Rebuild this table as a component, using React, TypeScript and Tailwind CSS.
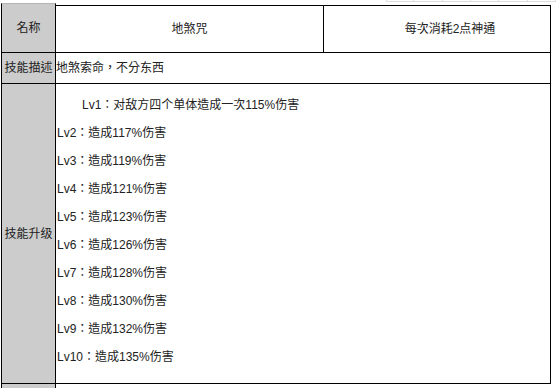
const levels = [
  "Lv1：对敌方四个单体造成一次115%伤害",
  "Lv2：造成117%伤害",
  "Lv3：造成119%伤害",
  "Lv4：造成121%伤害",
  "Lv5：造成123%伤害",
  "Lv6：造成126%伤害",
  "Lv7：造成128%伤害",
  "Lv8：造成130%伤害",
  "Lv9：造成132%伤害",
  "Lv10：造成135%伤害",
];

// TC face centres full-width punctuation (：，) like the reference
const font = "font-['Liberation_Sans','Noto_Sans_CJK_TC','Noto_Sans_CJK_SC',sans-serif]";

export default function App() {
  return (
    <div className={`w-[556px] h-[388px] overflow-hidden bg-white text-[12px] text-[#222] ${font}`}>
      {/* faint sheet grid peeking at the top */}
      <div className="flex h-[3px] ml-[386px]">
        {[0, 1, 2, 3, 4, 5].map((i) => (
          <div
            key={i}
            className={`w-[33px] h-[2px] border-b border-r border-[#dedede] ${i === 0 ? "border-l" : ""}`}
          />
        ))}
      </div>

      <div className="ml-[1px] w-[550px] flex flex-col">
        {/* row 1 */}
        <div className="flex h-[50px]">
          <div className="w-[55px] shrink-0 bg-[#cccccc] border-l border-r border-b border-black border-t border-t-[#b4b4b4] flex items-center justify-center">
            名称
          </div>
          <div className="flex-1 mt-[2px] flex border-t border-b border-black">
            <div className="w-[268px] border-r border-black flex items-center justify-center">
              地煞咒
            </div>
            <div className="flex-1 border-r border-black flex items-center justify-center pl-[26px]">
              每次消耗2点神通
            </div>
          </div>
        </div>

        {/* row 2 */}
        <div className="flex h-[31px]">
          <div className="w-[55px] shrink-0 bg-[#cccccc] border-l border-r border-b border-black flex items-center justify-center whitespace-nowrap">
            技能描述
          </div>
          <div className="flex-1 border-r border-b border-black flex items-center">
            地煞索命，不分东西
          </div>
        </div>

        {/* row 3 */}
        <div className="flex h-[300px]">
          <div className="w-[55px] shrink-0 bg-[#cccccc] border-l border-r border-b border-black flex items-center justify-center whitespace-nowrap">
            技能升级
          </div>
          <div className="flex-1 border-r border-b border-black flex flex-col pt-[7px] pl-[1px]">
            {levels.map((t, i) => (
              <div
                key={t}
                className={`h-[28px] flex items-center whitespace-nowrap ${i === 0 ? "pl-[25px]" : ""}`}
              >
                {t}
              </div>
            ))}
          </div>
        </div>

        {/* next row's label cell, cut off */}
        <div className="flex h-[5px]">
          <div className="w-[55px] shrink-0 bg-[#cccccc] border-l border-r border-black" />
        </div>
      </div>
    </div>
  );
}
